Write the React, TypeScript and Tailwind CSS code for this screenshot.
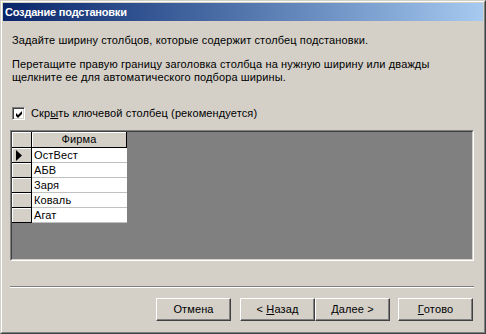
import React from 'react';

const rows = ['ОстВест', 'АБВ', 'Заря', 'Коваль', 'Агат'];

const btn =
  'w-[75px] h-[23px] bg-[#d4d0c8] border border-t-white border-l-white border-r-[#404040] border-b-[#404040] shadow-[inset_-1px_-1px_#808080] text-[11px] text-black flex items-center justify-center tracking-[0.12px]';

const App: React.FC = () => {
  return (
    <div
      className="w-[486px] h-[334px] bg-[#d4d0c8] text-black text-[11px] leading-[13px] tracking-[0.12px] select-none overflow-hidden"
      style={{ fontFamily: '"Liberation Sans", Arial, sans-serif' }}
    >
      {/* window frame */}
      <div className="w-full h-full border border-t-[#d4d0c8] border-l-[#d4d0c8] border-r-[#404040] border-b-[#404040]">
        <div className="w-full h-full border border-t-white border-l-white border-r-[#808080] border-b-[#808080] p-px flex flex-col">
          {/* title bar */}
          <div className="h-[18px] shrink-0 bg-gradient-to-r from-[#0a246a] to-[#a6caf0] flex items-center pl-[2px]">
            <span className="text-white font-bold text-[11px] leading-[18px] tracking-[-0.2px]">Создание подстановки</span>
          </div>

          {/* body */}
          <div className="flex-1 flex flex-col px-[8px]">
            <p className="mt-[13px] pl-[1px]">Задайте ширину столбцов, которые содержит столбец подстановки.</p>
            <p className="mt-[11px] pl-[1px]">
              Перетащите правую границу заголовка столбца на нужную ширину или дважды
              <br />
              щелкните ее для автоматического подбора ширины.
            </p>

            <label className="mt-[23px] flex items-center gap-[6px] pl-[1px] h-[13px]">
              <span className="w-[13px] h-[13px] bg-white border border-t-[#808080] border-l-[#808080] border-r-white border-b-white shadow-[inset_1px_1px_#404040,inset_-1px_-1px_#d4d0c8] flex items-center justify-center">
                <svg width="7" height="7" viewBox="0 0 7 7" className="ml-px mt-px">
                  <path d="M0 2 L2 4 L6 0 L6 3 L2 7 L0 5 Z" fill="#000" />
                </svg>
              </span>
              <span>
                Скр<span className="underline">ы</span>ть ключевой столбец (рекомендуется)
              </span>
            </label>

            {/* datasheet */}
            <div className="mt-[10px] -ml-px w-[464px] h-[131px] border border-t-[#808080] border-l-[#808080] border-r-white border-b-white">
              <div className="w-full h-full border border-t-[#404040] border-l-[#404040] border-r-[#d4d0c8] border-b-[#d4d0c8] bg-[#808080]">
                <div className="flex flex-col w-[115px]">
                  <div className="flex h-[16px]">
                    <div className="w-[20px] bg-[#d4d0c8] border-r border-b border-black shadow-[inset_1px_1px_white]" />
                    <div className="flex-1 bg-[#d4d0c8] border-r border-b border-black shadow-[inset_1px_1px_white] flex items-center justify-center">
                      Фирма
                    </div>
                  </div>
                  {rows.map((r, i) => (
                    <div key={r} className="flex h-[15px]">
                      <div className="w-[20px] bg-[#d4d0c8] border-r border-b border-black shadow-[inset_1px_1px_white] flex items-center pl-[4px]">
                        {i === 0 && (
                          <svg width="6" height="11" viewBox="0 0 6 11">
                            <path d="M0 0 L6 5.5 L0 11 Z" fill="#000" />
                          </svg>
                        )}
                      </div>
                      <div className="flex-1 bg-white border-b border-[#c0c0c0] flex items-center pl-[2px]">{r}</div>
                    </div>
                  ))}
                </div>
              </div>
            </div>

            {/* separator */}
            <div className="mt-[25px] -ml-px w-[464px] h-[2px] border-t border-[#808080] border-b border-b-white" />

            {/* buttons */}
            <div className="mt-[10px] flex justify-end pr-[2px]">
              <button className={btn}>Отмена</button>
              <div className="w-[9px]" />
              <button className={btn}>
                &lt;&nbsp;<span className="underline">Н</span>азад
              </button>
              <button className={btn}>
                <span className="underline">Д</span>алее&nbsp;&gt;
              </button>
              <div className="w-[8px]" />
              <button className={btn}>
                <span className="underline">Г</span>отово
              </button>
            </div>
          </div>
        </div>
      </div>
    </div>
  );
};

export default App;
